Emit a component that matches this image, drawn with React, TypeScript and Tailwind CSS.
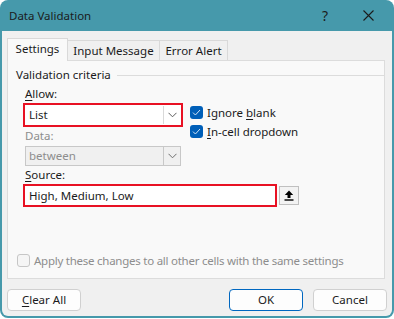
import React from "react";

const font = { fontFamily: '"Noto Sans", "Open Sans", Arial, sans-serif' };

function Chevron({ color = "#5c5c5c" }: { color?: string }) {
  return (
    <svg width="9" height="6" viewBox="0 0 9 6">
      <path d="M0.5 0.8 L4.5 4.8 L8.5 0.8" fill="none" stroke={color} strokeWidth="1" />
    </svg>
  );
}

function Check({ checked, disabled }: { checked?: boolean; disabled?: boolean }) {
  if (checked) {
    return (
      <span className="flex h-[13px] w-[13px] shrink-0 items-center justify-center rounded-[3px] bg-[#005fb8]">
        <svg width="9" height="7" viewBox="0 0 9 7">
          <path d="M1 3.6 L3.4 6 L8 1" fill="none" stroke="#cfe2f5" strokeWidth="1" />
        </svg>
      </span>
    );
  }
  return (
    <span
      className={
        "h-[13px] w-[13px] shrink-0 rounded-[3px] border " +
        (disabled ? "border-[#c6c6c6] bg-[#f5f5f5]" : "border-[#8a8a8a] bg-white")
      }
    />
  );
}

function Ul({ children }: { children: React.ReactNode }) {
  return <span className="underline decoration-1 underline-offset-2">{children}</span>;
}

export default function App() {
  return (
    <div className="h-[319px] w-[394px] bg-white text-[11.5px] text-[#1b1b1b]" style={font}>
      <div className="flex h-[318px] flex-col rounded-[8px] bg-[#4699ab] px-[2px] pb-[2px]">
        {/* title bar */}
        <div className="flex h-[31px] items-center pl-[7px]">
          <span className="flex-1 text-[11.5px] leading-none">Data Validation</span>
          <span className="w-[20px] text-center text-[14px] leading-none">?</span>
          <span className="ml-[23px] mr-[14px] flex w-[20px] justify-center">
            <svg width="11" height="11" viewBox="0 0 11 11">
              <path d="M0.5 0.5 L10.5 10.5 M10.5 0.5 L0.5 10.5" stroke="#1b1b1b" strokeWidth="1.1" />
            </svg>
          </span>
        </div>

        <div className="flex flex-1 flex-col rounded-b-[6px] bg-[#f0f0f0] px-[5px]">
          {/* tabs */}
          <div className="flex h-[29px] items-end pt-[7px]">
            <div className="relative z-10 -mb-px flex h-[23px] w-[61px] items-center justify-center border border-b-0 border-[#d9d9d9] bg-[#f9f9f9] pb-[2px]">
              Settings
            </div>
            <div className="flex h-[20px] w-[92px] items-center justify-center border border-b-0 border-l-0 border-[#d9d9d9] bg-[#f0f0f0]">
              Input Message
            </div>
            <div className="flex h-[20px] w-[68px] items-center justify-center border border-b-0 border-l-0 border-[#d9d9d9] bg-[#f0f0f0]">
              Error Alert
            </div>
          </div>

          {/* panel */}
          <div className="flex h-[219px] w-[378px] flex-col border border-[#dcdcdc] bg-[#f9f9f9]">
            <div className="mt-[6px] flex h-[16px] items-center pl-[8px]">
              <span>Validation criteria</span>
              <span className="ml-[6px] h-px flex-1 bg-[#dcdcdc]" />
            </div>

            <div className="flex pl-[15px]">
              <div className="flex w-[160px] flex-col">
                <div className="mt-[3px] h-[16px] pl-[2px] leading-[16px]">
                  <Ul>A</Ul>llow:
                </div>
                <div className="mt-[1px] flex h-[24px] border-2 border-[#e81123] bg-white">
                  <span className="flex-1 pl-[4px] leading-[20px]">List</span>
                  <span className="my-[1px] flex w-[18px] items-center justify-center border-l border-[#d9d9d9]">
                    <Chevron />
                  </span>
                </div>
                <div className="mt-[1px] h-[16px] pl-[2px] leading-[16px] text-[#8d8d8d]">Data:</div>
                <div className="ml-[2px] mt-[2px] flex h-[20px] w-[156px] border border-[#c8c8c8] bg-[#f0f0f0] text-[#8d8d8d]">
                  <span className="flex-1 pl-[3px] leading-[18px]">between</span>
                  <span className="flex w-[17px] items-center justify-center border-l border-[#c8c8c8]">
                    <Chevron color="#6e6e6e" />
                  </span>
                </div>
                <div className="mt-[1px] h-[16px] pl-[2px] leading-[16px]">
                  <Ul>S</Ul>ource:
                </div>
              </div>

              <div className="ml-[7px] mt-[23px] flex flex-col gap-[6px]">
                <div className="flex items-center gap-[4px]">
                  <Check checked />
                  <span className="leading-[13px]">
                    Ignore <Ul>b</Ul>lank
                  </span>
                </div>
                <div className="flex items-center gap-[4px]">
                  <Check checked />
                  <span className="leading-[13px]">
                    <Ul>I</Ul>n-cell dropdown
                  </span>
                </div>
              </div>
            </div>

            <div className="ml-[15px] mt-[1px] flex items-center gap-[2px]">
              <div className="flex h-[23px] w-[254px] items-center border-2 border-[#e81123] bg-white pl-[4px]">
                High, Medium, Low
              </div>
              <div className="flex h-[19px] w-[20px] items-center justify-center border border-[#c0c0c0] bg-[#f3f3f3]">
                <svg width="10" height="11" viewBox="0 0 10 11">
                  <path d="M5 0.5 L9.2 5 L6.5 5 L6.5 8 L3.5 8 L3.5 5 L0.8 5 Z" fill="#000" />
                  <rect x="0.5" y="9.3" width="9" height="1.4" fill="#000" />
                </svg>
              </div>
            </div>

            <div className="mt-[47px] flex items-center gap-[4px] pl-[9px] text-[#8d8d8d]">
              <Check disabled />
              <span className="leading-[13px] tracking-[-0.25px]">
                Apply these changes to all other cells with the same settings
              </span>
            </div>
          </div>

          {/* buttons */}
          <div className="mt-[10px] flex">
            <button className="flex h-[22px] w-[74px] items-center justify-center rounded-[4px] border border-[#d0d0d0] bg-[#fdfdfd]">
              <Ul>C</Ul>lear All
            </button>
            <div className="flex-1" />
            <button className="flex h-[22px] w-[74px] items-center justify-center rounded-[4px] border border-[#0067c0] bg-[#fdfdfd]">
              OK
            </button>
            <button className="ml-[10px] flex h-[22px] w-[74px] items-center justify-center rounded-[4px] border border-[#d0d0d0] bg-[#fdfdfd]">
              Cancel
            </button>
          </div>
        </div>
      </div>
    </div>
  );
}
